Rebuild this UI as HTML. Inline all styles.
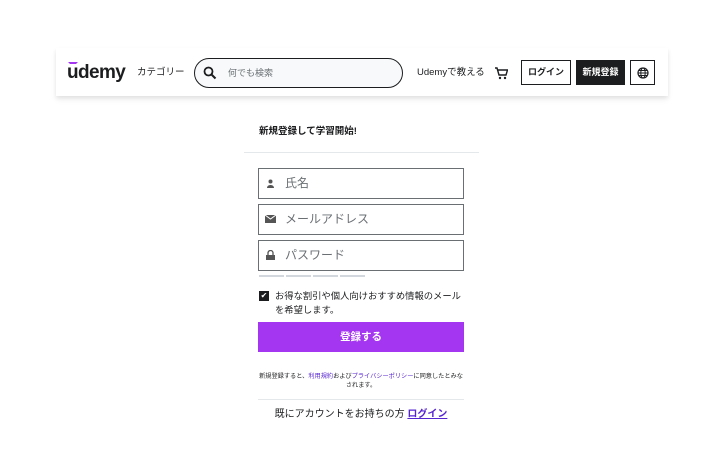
<!DOCTYPE html>
<html><head><meta charset="utf-8"><style>
*{box-sizing:border-box;margin:0;padding:0}
body{width:720px;height:468px;background:#fff;font-family:"Liberation Sans","Noto Sans CJK JP",sans-serif;color:#1c1d1f;position:relative;overflow:hidden;line-height:1.2}
.hdr{position:absolute;left:56px;top:48px;width:612px;height:48px;background:#fff;box-shadow:0 2px 4px rgba(0,0,0,.08),0 4px 6px rgba(0,0,0,.05)}
.a{position:absolute}
.logo{left:67px;top:61px;font-size:19px;font-weight:bold;line-height:24px;letter-spacing:-.6px;color:#1c1d1f}
.search{left:194px;top:58px;width:209px;height:30px;border:1px solid #1c1d1f;border-radius:15px;background:#f7f9fa}
.btn{border:1px solid #1c1d1f;font-size:9px;font-weight:bold;display:flex;align-items:center;justify-content:center}
.inp{left:258px;width:206px;height:31px;border:1px solid #6a6f73;font-size:12px;color:#6a6f73;display:flex;align-items:center;padding-left:26px}
.bar{top:275px;height:2px;width:25px;background:#d1d7dc}
</style></head><body>
<div class="hdr"></div>
<div class="a logo">udemy</div>
<div class="a" style="left:68px;top:62px;width:10px;height:4px;border-top:2px solid #a435f0;border-left:2px solid transparent;border-right:2px solid transparent"></div>
<div class="a" style="left:137px;top:67px;font-size:9.5px;line-height:12px;color:#1c1d1f">カテゴリー</div>
<div class="a search"></div>
<svg class="a" style="left:203px;top:66px" width="14" height="14" viewBox="0 0 14 14"><circle cx="5.5" cy="5.5" r="4" fill="none" stroke="#1c1d1f" stroke-width="1.8"/><path d="M8.5 8.5l4 4" stroke="#1c1d1f" stroke-width="2"/></svg>
<div class="a" style="left:228px;top:67px;font-size:9px;line-height:12px;color:#6a6f73">何でも検索</div>
<div class="a" style="left:417px;top:67px;font-size:9.5px;line-height:12px">Udemyで教える</div>
<svg class="a" style="left:494px;top:66px" width="14" height="14" viewBox="0 0 14 14"><path d="M1 2h2l2 7h7l1.5-5H4" fill="none" stroke="#1c1d1f" stroke-width="1.4"/><circle cx="6" cy="12" r="1.2" fill="#1c1d1f"/><circle cx="11" cy="12" r="1.2" fill="#1c1d1f"/></svg>
<div class="a btn" style="left:521px;top:60px;width:50px;height:25px">ログイン</div>
<div class="a btn" style="left:576px;top:60px;width:49px;height:25px;background:#1c1d1f;color:#fff">新規登録</div>
<div class="a btn" style="left:630px;top:60px;width:25px;height:25px"><svg width="12" height="12" viewBox="0 0 12 12"><circle cx="6" cy="6" r="5" fill="none" stroke="#1c1d1f" stroke-width="1.2"/><ellipse cx="6" cy="6" rx="2.2" ry="5" fill="none" stroke="#1c1d1f"/><path d="M1 6h10M2 3.5h8M2 8.5h8" stroke="#1c1d1f"/></svg></div>
<div class="a" style="left:259px;top:126px;font-size:9.5px;font-weight:bold">新規登録して学習開始!</div>
<div class="a" style="left:244px;top:152px;width:235px;height:1px;background:#e4e8eb"></div>
<div class="a inp" style="top:168px">氏名</div>
<div class="a inp" style="top:204px">メールアドレス</div>
<div class="a inp" style="top:240px">パスワード</div>
<svg class="a" style="left:266px;top:179px" width="9" height="9" viewBox="0 0 9 9"><circle cx="4.5" cy="2.5" r="2" fill="#555"/><path d="M1 9c0-4 7-4 7 0z" fill="#555"/></svg>
<svg class="a" style="left:265px;top:215px" width="11" height="8" viewBox="0 0 11 8"><rect width="11" height="8" fill="#555"/><path d="M0 0l5.5 4L11 0" stroke="#fff" fill="none"/></svg>
<svg class="a" style="left:266px;top:250px" width="9" height="10" viewBox="0 0 9 10"><path d="M2 5V3a2.5 2.5 0 0 1 5 0v2" stroke="#555" fill="none" stroke-width="1.3"/><rect y="5" width="9" height="5" fill="#555"/></svg>
<div class="a bar" style="left:259px"></div><div class="a bar" style="left:286px"></div><div class="a bar" style="left:313px"></div><div class="a bar" style="left:340px"></div>
<div class="a" style="left:259px;top:291px;width:10px;height:10px;background:#1c1d1f;color:#fff;font-size:8px;line-height:10px;text-align:center">✔</div>
<div class="a" style="left:275px;top:289px;width:195px;font-size:9.3px;line-height:14px;color:#1c1d1f">お得な割引や個人向けおすすめ情報のメール<br>を希望します。</div>
<div class="a" style="left:258px;top:322px;width:206px;height:30px;background:#a435f0;color:#fff;font-size:10.5px;font-weight:bold;display:flex;align-items:center;justify-content:center">登録する</div>
<div class="a" style="left:254px;top:372px;width:214px;font-size:6.2px;line-height:9px;color:#1c1d1f;text-align:center">新規登録すると、<span style="color:#5624d0">利用規約</span>および<span style="color:#5624d0">プライバシーポリシー</span>に同意したとみな<br>されます。</div>
<div class="a" style="left:258px;top:399px;width:206px;height:1px;background:#e4e8eb"></div>
<div class="a" style="left:258px;top:409px;width:206px;font-size:10px;text-align:center">既にアカウントをお持ちの方 <span style="color:#5624d0;font-weight:bold;text-decoration:underline">ログイン</span></div>
</body></html>
